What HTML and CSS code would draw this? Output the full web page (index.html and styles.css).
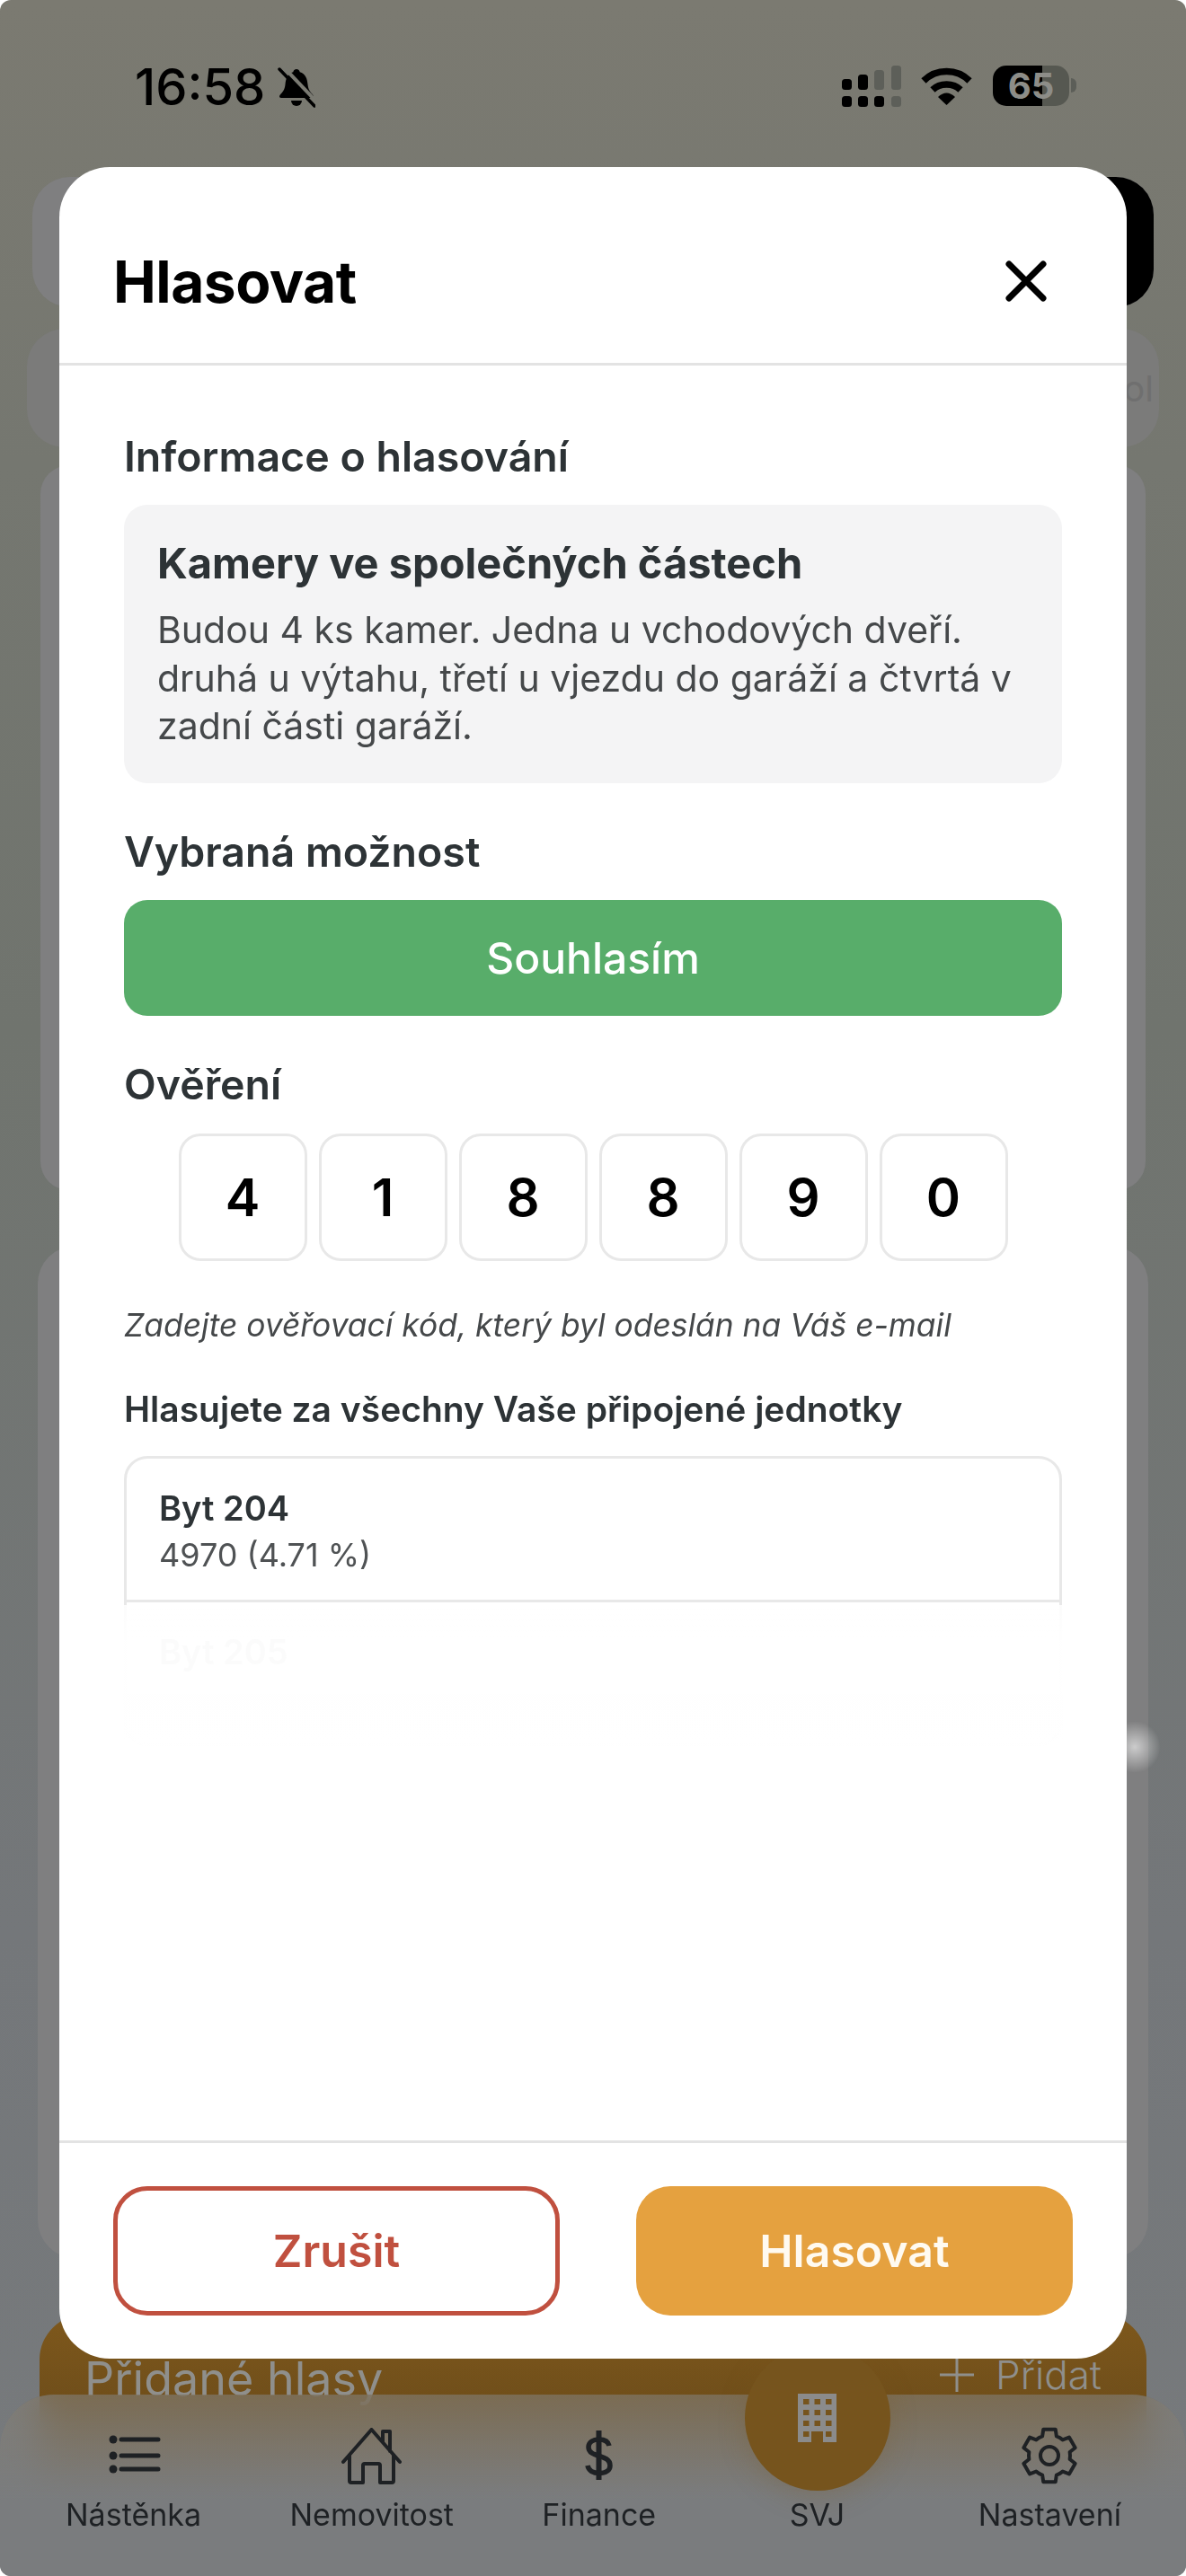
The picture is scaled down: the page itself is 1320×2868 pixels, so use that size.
FILE: index.html
```html
<!DOCTYPE html>
<html lang="cs">
<head>
  <meta charset="UTF-8" />
  <meta name="viewport" content="width=device-width, initial-scale=1.0" />
  <title>Hlasovat</title>
  <link rel="stylesheet" href="styles.css">
</head>
<body>
  <div class="screen">
    <div class="status-bar">
      <div class="status-left">
        <span class="time">16:58</span>
        <svg class="bell" viewBox="0 0 42 46" width="42" height="46">
          <path d="M21 3c-2 0-3.5 1.4-3.7 3.2C11 8 9 13.5 8.5 20c-.4 6-3.5 9-6 12-1 1.2-.4 3 1.500 3h34c1.900 0 2.500-1.800 1.500-3-2.500-3-5.600-6-6-12-.5-6.500-2.500-12-8.800-13.800C24.500 4.400 23 3 21 3z" fill="#000"/>
          <path d="M15 38a6 6 0 0 0 12 0z" fill="#000"/>
          <line x1="6" y1="0" x2="45" y2="41" stroke="#7a7a72" stroke-width="4"/>
          <line x1="2" y1="3" x2="41" y2="44" stroke="#000" stroke-width="3.500" stroke-linecap="round"/>
        </svg>
      </div>
      <div class="status-right">
        <svg viewBox="0 0 66 46" width="66" height="46">
          <rect x="0" y="15" width="11" height="12" rx="3.500" fill="#000"/>
          <rect x="18" y="10" width="11" height="17" rx="3.500" fill="#000"/>
          <rect x="36" y="5" width="11" height="22" rx="3.500" fill="#5d5f59"/>
          <rect x="55" y="0" width="11" height="27" rx="3.500" fill="#5d5f59"/>
          <rect x="0" y="34" width="11" height="12" rx="3.500" fill="#000"/>
          <rect x="18" y="34" width="11" height="12" rx="3.500" fill="#000"/>
          <rect x="36" y="34" width="11" height="12" rx="3.500" fill="#000"/>
          <rect x="55" y="34" width="11" height="12" rx="3.500" fill="#5d5f59"/>
        </svg>
        <svg class="wifi" viewBox="0 0 57 42" width="57" height="42">
          <path d="M3 15C17 1 40 1 54 15" fill="none" stroke="#000" stroke-width="7.500"/>
          <path d="M13 25C21 17 36 17 44 25" fill="none" stroke="#000" stroke-width="7.500"/>
          <path d="M19 33C25 27 32 27 38 33L28.500 42z" fill="#000"/>
        </svg>
        <div class="battery"><span>65</span></div>
        <div class="battery-tip"></div>
      </div>
    </div>

    <!-- page behind the dialog -->
    <div class="bg-card card-top"><div class="card-top-btn"></div></div>
    <div class="bg-card card-search"><span class="search-text">ol</span></div>
    <div class="bg-card card-main"></div>
    <div class="bg-card card-votes"></div>
    <div class="bg-card card-added">
      <span class="added-title">Přidané hlasy</span>
      <span class="added-link">
        <svg viewBox="0 0 38 38" width="38" height="38"><path d="M19 0v38M0 19h38" stroke="#8f8f8c" stroke-width="3"/></svg>
        Přidat
      </span>
    </div>
    <div class="glow"></div>

    <nav class="tabbar">
      <div class="tab">
        <svg viewBox="0 0 63 63" width="63" height="63">
          <g fill="#1e2124"><circle cx="9" cy="13" r="4.500"/><circle cx="9" cy="31" r="4.500"/><circle cx="9" cy="46" r="4.500"/></g>
          <path d="M18 13h41M18 31h41M18 46h41" stroke="#1e2124" stroke-width="5" stroke-linecap="round"/>
        </svg>
        <span>Nástěnka</span>
      </div>
      <div class="tab">
        <svg viewBox="0 0 67 63" width="67" height="63">
          <path d="M2 38L33.500 2 65 38M46 16V4h8v22M9 30v29a2 2 0 0 0 2 2h13V42a2 2 0 0 1 2-2h15a2 2 0 0 1 2 2v19h13a2 2 0 0 0 2-2V30" fill="none" stroke="#1e2124" stroke-width="4" stroke-linecap="round" stroke-linejoin="round"/>
        </svg>
        <span>Nemovitost</span>
      </div>
      <div class="tab">
        <svg viewBox="0 0 63 63" width="63" height="63">
          <path d="M31.500 3v55" stroke="#1e2124" stroke-width="6"/>
          <path d="M43 20c-1-5-5-7-11.500-7-6.500 0-11.500 3-11.500 8.500 0 12.500 24 7 24 20.500 0 5.500-5 8.500-12 8.500-7 0-12-3-13-8.500" fill="none" stroke="#1e2124" stroke-width="5.500"/>
        </svg>
        <span>Finance</span>
      </div>
      <div class="tab tab-active">
        <div class="tab-circle">
          <svg viewBox="0 0 43 54" width="43" height="54">
            <path d="M0 0h43v54H28V42H15v12H0z" fill="#8b8b8b"/>
            <g fill="#76541d">
              <rect x="6" y="6" width="6.500" height="6"/><rect x="18.500" y="6" width="6.500" height="6"/><rect x="31" y="6" width="6.500" height="6"/>
              <rect x="6" y="18" width="6.500" height="6"/><rect x="18.500" y="18" width="6.500" height="6"/><rect x="31" y="18" width="6.500" height="6"/>
              <rect x="6" y="30" width="6.500" height="6"/><rect x="18.500" y="30" width="6.500" height="6"/><rect x="31" y="30" width="6.500" height="6"/>
              <rect x="6" y="42" width="6.500" height="6"/><rect x="31" y="42" width="6.500" height="6"/>
            </g>
          </svg>
        </div>
        <span>SVJ</span>
      </div>
      <div class="tab">
        <svg viewBox="0 0 64 64" width="64" height="64">
          <path d="M24.130 10.390L25.250 2.770H38.750L39.870 10.390A23 23 0 0 1 46.780 14.380L53.940 11.540L60.690 23.230L54.650 28.010A23 23 0 0 1 54.650 35.990L60.690 40.770L53.940 52.460L46.780 49.620A23 23 0 0 1 39.870 53.610L38.750 61.230H25.250L24.130 53.610A23 23 0 0 1 17.220 49.620L10.060 52.460L3.310 40.770L9.350 35.990A23 23 0 0 1 9.350 28.010L3.310 23.230L10.060 11.540L17.220 14.380A23 23 0 0 1 24.130 10.390z" fill="none" stroke="#1e2124" stroke-width="4" stroke-linejoin="round"/>
          <circle cx="32" cy="32" r="10" fill="none" stroke="#1e2124" stroke-width="4"/>
        </svg>
        <span>Nastavení</span>
      </div>
    </nav>

    <div class="modal">
      <div class="modal-header">
        <h2>Hlasovat</h2>
        <svg viewBox="0 0 46 46" width="46" height="46"><path d="M4 4l38 38M42 4L4 42" stroke="#000" stroke-width="7" stroke-linecap="round"/></svg>
      </div>

      <div class="modal-body">
        <div class="label">Informace o hlasování</div>
        <div class="info-box">
          <h3>Kamery ve společných částech</h3>
          <p>Budou 4 ks kamer. Jedna u vchodových dveří. druhá u výtahu, třetí u vjezdu do garáží a čtvrtá v zadní části garáží.</p>
        </div>

        <div class="label label-gap">Vybraná možnost</div>
        <div class="choice">Souhlasím</div>

        <div class="label label-gap">Ověření</div>
        <div class="otp">
          <div class="otp-cell">4</div>
          <div class="otp-cell">1</div>
          <div class="otp-cell">8</div>
          <div class="otp-cell">8</div>
          <div class="otp-cell">9</div>
          <div class="otp-cell">0</div>
        </div>
        <div class="hint">Zadejte ověřovací kód, který byl odeslán na Váš e-mail</div>

        <div class="units-title">Hlasujete za všechny Vaše připojené jednotky</div>
        <div class="units">
          <div class="unit">
            <div class="unit-name">Byt 204</div>
            <div class="unit-share">4970 (4.71 %)</div>
          </div>
          <div class="unit unit-next">
            <div class="unit-name">Byt 205</div>
          </div>
          <div class="units-fade"></div>
        </div>
      </div>

      <div class="modal-footer">
        <button class="btn btn-cancel">Zrušit</button>
        <button class="btn btn-vote">Hlasovat</button>
      </div>
    </div>
  </div>
</body>
</html>
```

FILE: styles.css
```css
* {
  box-sizing: border-box;
}

body {
  margin: 0;
  background: #fff;
  font-family: Inter, "Noto Sans", sans-serif;
}

.screen {
  position: relative;
  width: 1320px;
  height: 2868px;
  overflow: hidden;
  border-radius: 12px;
  background: linear-gradient(180deg, #7b7a71 0%, #757770 18%, #70746e 40%, #74777a 75%, #777a7c 100%);
}

/* status bar */
.status-bar {
  display: flex;
  justify-content: space-between;
  align-items: flex-start;
  height: 197px;
  padding: 73px 122px 0 150px;
}

.status-left {
  display: flex;
  align-items: center;
  gap: 14px;
}

.time {
  font-size: 56px;
  font-weight: 500;
  line-height: 48px;
  color: #000;
}

.status-right {
  display: flex;
  align-items: flex-start;
}

.wifi {
  margin: 2px 23px 0 22px;
}

.battery {
  display: flex;
  align-items: center;
  justify-content: center;
  width: 85px;
  height: 45px;
  border-radius: 15px;
  background: linear-gradient(90deg, #000 65%, #565851 65%);
  color: #8d8d88;
  font-size: 40px;
  font-weight: 700;
}

.battery-tip {
  width: 6px;
  height: 16px;
  margin: 14px 0 0 2px;
  border-radius: 0 8px 8px 0;
  background: #5c5e58;
}

/* page behind the dialog */
.bg-card {
  border-radius: 42px;
  background: #7f7f80;
}

.card-top {
  display: flex;
  justify-content: flex-end;
  height: 145px;
  margin: 0 36px;
}

.card-top-btn {
  width: 220px;
  border-radius: 42px;
  background: #000;
}

.card-search {
  display: flex;
  justify-content: flex-end;
  align-items: center;
  height: 132px;
  margin: 24px 30px 0;
  padding-right: 6px;
  background: #7b7b7a;
}

.search-text {
  font-size: 40px;
  color: #6f6f6f;
}

.card-main {
  height: 807px;
  margin: 20px 45px 0;
  border-radius: 32px;
}

.card-votes {
  height: 1127px;
  margin: 62px 42px 0;
}

.card-added {
  display: flex;
  justify-content: space-between;
  align-items: flex-start;
  height: 200px;
  margin: 63px 44px 0;
  padding: 40px 50px 0;
  border-radius: 50px 50px 0 0;
  background: linear-gradient(180deg, #7e581c 0%, #6f4e1a 50%, #6f4e1a 100%);
}

.added-title {
  font-size: 52px;
  color: #8f8f8c;
}

.added-link {
  display: flex;
  align-items: center;
  gap: 24px;
  font-size: 44px;
  font-weight: 300;
  color: #8f8f8c;
}

.glow {
  position: absolute;
  left: 1235px;
  top: 1915px;
  width: 56px;
  height: 60px;
  border-radius: 50%;
  background: radial-gradient(circle, rgba(255, 255, 255, .6) 0%, rgba(255, 255, 255, 0) 70%);
}

/* tab bar */
.tabbar {
  position: absolute;
  left: 0;
  right: 0;
  bottom: 0;
  display: flex;
  justify-content: space-between;
  align-items: flex-end;
  height: 202px;
  padding: 0 72px 48px 73px;
  border-radius: 60px 60px 0 0;
  background: linear-gradient(180deg, rgba(130, 126, 118, .62) 0%, rgba(126, 125, 122, .85) 30%, #7a7c7e 58%);
  backdrop-filter: blur(20px);
}

.tab {
  display: flex;
  flex-direction: column;
  align-items: center;
  font-size: 34px;
  line-height: 40px;
  color: #1e2124;
}

.tab svg {
  margin-bottom: 14px;
}

.tab-active {
  width: 162px;
}

.tab-circle {
  display: flex;
  align-items: center;
  justify-content: center;
  width: 162px;
  height: 162px;
  margin-bottom: 7px;
  border-radius: 50%;
  background: #76541d;
  box-shadow: 0 6px 30px rgba(118, 84, 29, .25);
}

.tab-circle svg {
  margin-bottom: 0;
}

/* dialog */
.modal {
  position: absolute;
  left: 66px;
  top: 186px;
  display: flex;
  flex-direction: column;
  width: 1188px;
  height: 2440px;
  border-radius: 56px;
  background: #fff;
}

.modal-header {
  display: flex;
  justify-content: space-between;
  align-items: center;
  height: 221px;
  padding: 36px 89px 0 60px;
  border-bottom: 3px solid #e3e3e3;
}

.modal-header h2 {
  margin: 0;
  font-size: 64px;
  font-weight: 700;
  letter-spacing: -.5px;
  color: #000;
}

.modal-body {
  flex: 1;
  padding: 73px 72px 0;
}

.label {
  font-size: 46.500px;
  font-weight: 600;
  line-height: 56px;
  color: #2d3336;
}

.label-gap {
  margin-top: 48px;
}

.info-box {
  margin-top: 26px;
  padding: 37px 37px 36px;
  border-radius: 26px;
  background: #f4f4f5;
}

.info-box h3 {
  margin: 0 0 20px;
  font-size: 47px;
  font-weight: 700;
  line-height: 56px;
  color: #2d3336;
}

.info-box p {
  margin: 0;
  font-size: 41px;
  line-height: 53.500px;
  color: #45484a;
}

.choice {
  display: flex;
  align-items: center;
  justify-content: center;
  height: 129px;
  margin-top: 26px;
  border-radius: 26px;
  background: #58ad6a;
  color: #fff;
  font-size: 48px;
  font-weight: 500;
}

.otp {
  display: flex;
  justify-content: center;
  gap: 13px;
  margin-top: 27px;
}

.otp-cell {
  display: flex;
  align-items: center;
  justify-content: center;
  width: 143px;
  height: 142px;
  border: 3px solid #e8e8e8;
  border-radius: 24px;
  font-size: 58px;
  font-weight: 600;
  color: #000;
}

.hint {
  margin-top: 50px;
  font-size: 35.400px;
  font-style: italic;
  line-height: 44px;
  color: #45484a;
}

.units-title {
  margin-top: 47px;
  font-size: 39px;
  font-weight: 600;
  line-height: 48px;
  color: #2d3336;
}

.units {
  position: relative;
  height: 323px;
  margin-top: 28px;
  border: 3px solid #e8e8e8;
  border-radius: 26px;
}

.unit {
  padding: 33px 36px 26px;
  border-bottom: 3px solid #e8e8e8;
}

.unit-next {
  border-bottom: none;
}

.unit-name {
  font-size: 38px;
  font-weight: 600;
  line-height: 44px;
  color: #2d3336;
}

.unit-share {
  margin-top: 6px;
  font-size: 36px;
  line-height: 48px;
  color: #4f5254;
}

.units-fade {
  position: absolute;
  left: -4px;
  right: -4px;
  top: 163px;
  bottom: -4px;
  background: linear-gradient(180deg, rgba(255, 255, 255, .85) 0%, rgba(255, 255, 255, .98) 25%, rgba(255, 255, 255, .985) 100%);
}

.modal-footer {
  display: flex;
  justify-content: space-between;
  height: 243px;
  padding: 48px 60px 0;
  border-top: 3px solid #e3e3e3;
}

.btn {
  height: 144px;
  border-radius: 38px;
  font-family: inherit;
  font-size: 50px;
  font-weight: 600;
}

.btn-cancel {
  width: 497px;
  border: 5px solid #c0503f;
  background: #fff;
  color: #c0503f;
}

.btn-vote {
  width: 486px;
  border: none;
  background: #e5a13f;
  color: #fffaf0;
}
```
